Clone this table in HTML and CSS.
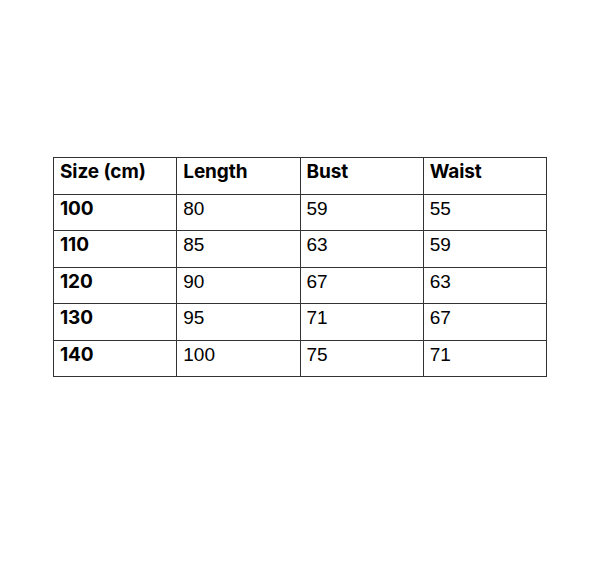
FILE: index.html
```html
<!DOCTYPE html>
<html>
<head>
<meta charset="utf-8">
<link rel="stylesheet" href="styles.css">
</head>
<body>
<table class="size-table">
  <colgroup><col class="c"><col class="c"><col class="c"><col class="c"></colgroup>
  <tr class="head"><th>Size (cm)</th><th>Length</th><th>Bust</th><th>Waist</th></tr>
  <tr><th>100</th><td>80</td><td>59</td><td>55</td></tr>
  <tr><th>110</th><td>85</td><td>63</td><td>59</td></tr>
  <tr><th>120</th><td>90</td><td>67</td><td>63</td></tr>
  <tr><th>130</th><td>95</td><td>71</td><td>67</td></tr>
  <tr><th>140</th><td>100</td><td>75</td><td>71</td></tr>
</table>
</body>
</html>
```
FILE: styles.css
```css
html, body { margin: 0; padding: 0; background: #fff; }
body { padding: 157px 0 0 53px; }
.size-table {
  border-collapse: collapse;
  table-layout: fixed;
  width: 493px;
  color: #000;
}
.size-table .c { width: 123.25px; }
.size-table th, .size-table td {
  border: 1px solid #333;
  height: 36.5px;
  padding: 0 6px;
  text-align: left;
  vertical-align: top;
  box-sizing: border-box;
  white-space: nowrap;
}
.size-table th {
  font-family: Inter, "Noto Sans", sans-serif;
  font-weight: 700;
  font-size: 19px;
  line-height: 24px;
  padding-top: 2px;
  letter-spacing: -0.1px;
}
.size-table td {
  font-family: "Liberation Sans", Arial, sans-serif;
  font-size: 19px;
  line-height: 24px;
  padding-top: 2px;
}
```
